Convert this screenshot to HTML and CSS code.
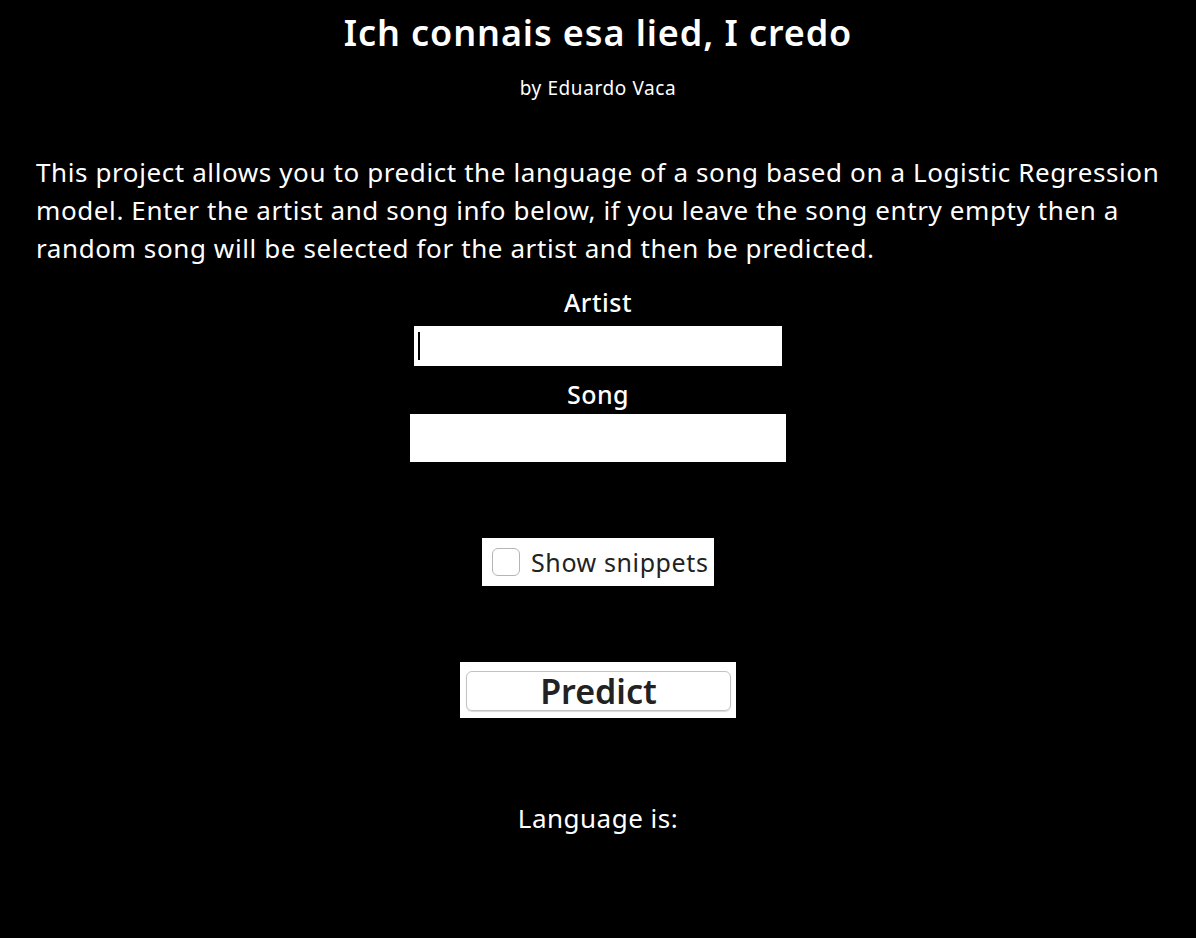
FILE: index.html
```html
<!DOCTYPE html>
<html>
<head>
<meta charset="utf-8">
<link rel="stylesheet" href="styles.css">
</head>
<body>
<div class="page">
  <h1 class="title">Ich connais esa lied, I credo</h1>
  <p class="byline">by Eduardo Vaca</p>
  <p class="intro">This project allows you to predict the language of a song based on a Logistic Regression model. Enter the artist and song info below, if you leave the song entry empty then a random song will be selected for the artist and then be predicted.</p>
  <div class="form">
    <label class="label label-artist">Artist</label>
    <div class="field field-artist"><span class="caret"></span></div>
    <label class="label label-song">Song</label>
    <div class="field field-song"></div>
    <div class="check-wrap">
      <span class="checkbox"></span>
      <span class="check-text">Show snippets</span>
    </div>
    <div class="btn-wrap">
      <div class="btn">Predict</div>
    </div>
    <p class="result">Language is:</p>
  </div>
</div>
</body>
</html>
```

FILE: styles.css
```css
html, body {
  margin: 0;
  padding: 0;
  background: #000;
}
body {
  color: #fff;
  font-family: "Noto Sans", Lato, sans-serif;
}
.page {
  display: flex;
  flex-direction: column;
  align-items: center;
  padding-top: 10px;
}
.title {
  margin: 0;
  font-size: 36px;
  font-weight: 600;
  letter-spacing: 0.9px;
  line-height: 46px;
}
.byline {
  margin: 20px 0 0;
  font-size: 19px;
  letter-spacing: 0.6px;
  line-height: 24px;
}
.intro {
  align-self: stretch;
  margin: 53px 36px 0;
  font-size: 26px;
  letter-spacing: 0.6px;
  line-height: 38px;
}
.form {
  display: flex;
  flex-direction: column;
  align-items: center;
}
.label {
  font-size: 25px;
  font-weight: 500;
  letter-spacing: 0.5px;
  line-height: 28px;
}
.label-artist { margin-top: 21px; }
.label-song { margin-top: 14px; }
.field {
  background: #fff;
  display: flex;
  align-items: center;
}
.field-artist {
  width: 368px;
  height: 40px;
  margin-top: 10px;
}
.field-song {
  width: 376px;
  height: 48px;
  margin-top: 6px;
}
.caret {
  width: 2px;
  height: 28px;
  background: #000;
  margin-left: 4px;
}
.check-wrap {
  margin-top: 76px;
  width: 232px;
  height: 48px;
  background: #fff;
  display: flex;
  align-items: center;
  box-sizing: border-box;
  padding-left: 10px;
  gap: 11px;
}
.checkbox {
  width: 28px;
  height: 28px;
  box-sizing: border-box;
  border: 1px solid #b5b5b5;
  border-radius: 6px;
  background: #fff;
}
.check-text {
  color: #222;
  font-family: "Noto Sans", sans-serif;
  font-size: 25px;
  letter-spacing: 0.6px;
}
.btn-wrap {
  margin-top: 76px;
  width: 276px;
  height: 56px;
  background: #fff;
  box-sizing: border-box;
  padding: 9px 5px 7px 6px;
  display: flex;
}
.btn {
  flex: 1;
  border: 1px solid #c2c2c2;
  border-radius: 6px;
  box-shadow: 0 1px 1px rgba(0,0,0,0.15);
  color: #222;
  font-size: 34px;
  font-weight: 600;
  line-height: 38px;
  text-align: center;
}
.result {
  margin: 84px 0 0;
  font-size: 26px;
  letter-spacing: 0.5px;
  line-height: 32px;
}
```
